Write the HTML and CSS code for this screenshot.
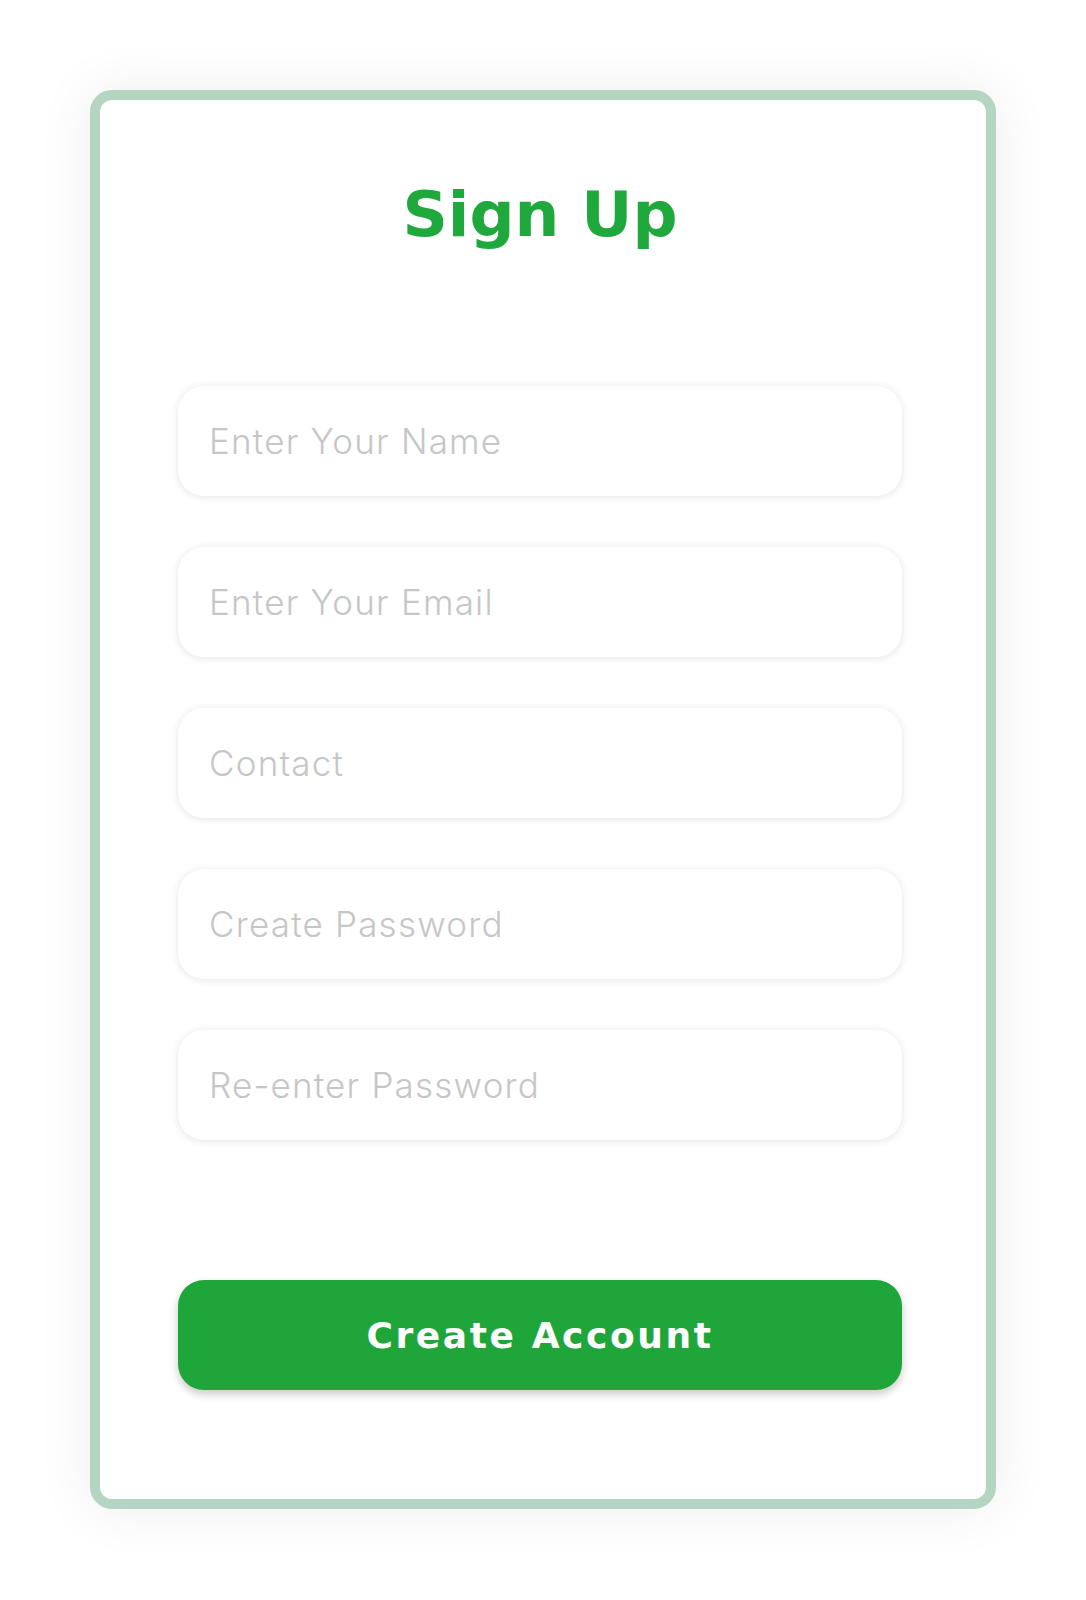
FILE: index.html
```html
<!DOCTYPE html>
<html lang="en">
<head>
<meta charset="utf-8">
<title>Sign Up</title>
<link rel="stylesheet" href="styles.css">
</head>
<body>
  <div class="page">
    <form class="card">
      <h1 class="title">Sign Up</h1>
      <div class="fields">
        <input class="field" type="text" placeholder="Enter Your Name">
        <input class="field" type="email" placeholder="Enter Your Email">
        <input class="field" type="text" placeholder="Contact">
        <input class="field" type="password" placeholder="Create Password">
        <input class="field" type="password" placeholder="Re-enter Password">
      </div>
      <button class="submit" type="button">Create Account</button>
    </form>
  </div>
</body>
</html>
```
FILE: styles.css
```css
* { box-sizing: border-box; }
html, body { margin: 0; padding: 0; background: #ffffff; }
body { font-family: "Inter", "Noto Sans", sans-serif; }
.page { padding-top: 90px; padding-bottom: 91px; }
.card {
  width: 906px;
  height: 1419px;
  margin: 0 auto;
  border: 10px solid #b3d5c1;
  border-radius: 22px;
  background: #fff;
  box-shadow: 0 0 60px rgba(0, 0, 0, 0.07);
  padding: 0 84px 0 78px;
  display: flex;
  flex-direction: column;
}
.title {
  margin: 0;
  padding-top: 80px;
  height: 286px;
  text-align: center;
  font-family: "DejaVu Sans", "Inter", sans-serif;
  font-size: 63px;
  line-height: 70px;
  font-weight: 700;
  color: #1fa83c;
}
.fields { display: flex; flex-direction: column; gap: 51px; }
.field {
  display: block;
  width: 724px;
  height: 110px;
  border: none;
  outline: none;
  border-radius: 26px;
  background: #fff;
  box-shadow: 0 1px 8px rgba(0, 0, 0, 0.11);
  padding: 0 31px;
  font-family: "Inter", "Noto Sans", sans-serif;
  font-size: 35px;
  font-weight: 300;
  letter-spacing: 1.2px;
  color: #333;
}
.field::placeholder { color: #c6c6c6; }
.submit {
  margin-top: 140px;
  width: 724px;
  height: 110px;
  border: none;
  border-radius: 26px;
  background: #1fa63a;
  box-shadow: 0 4px 8px rgba(0, 0, 0, 0.22);
  color: #fff;
  font-family: "DejaVu Sans", "Inter", sans-serif;
  font-size: 36px;
  font-weight: 700;
  letter-spacing: 2.6px;
}
```
